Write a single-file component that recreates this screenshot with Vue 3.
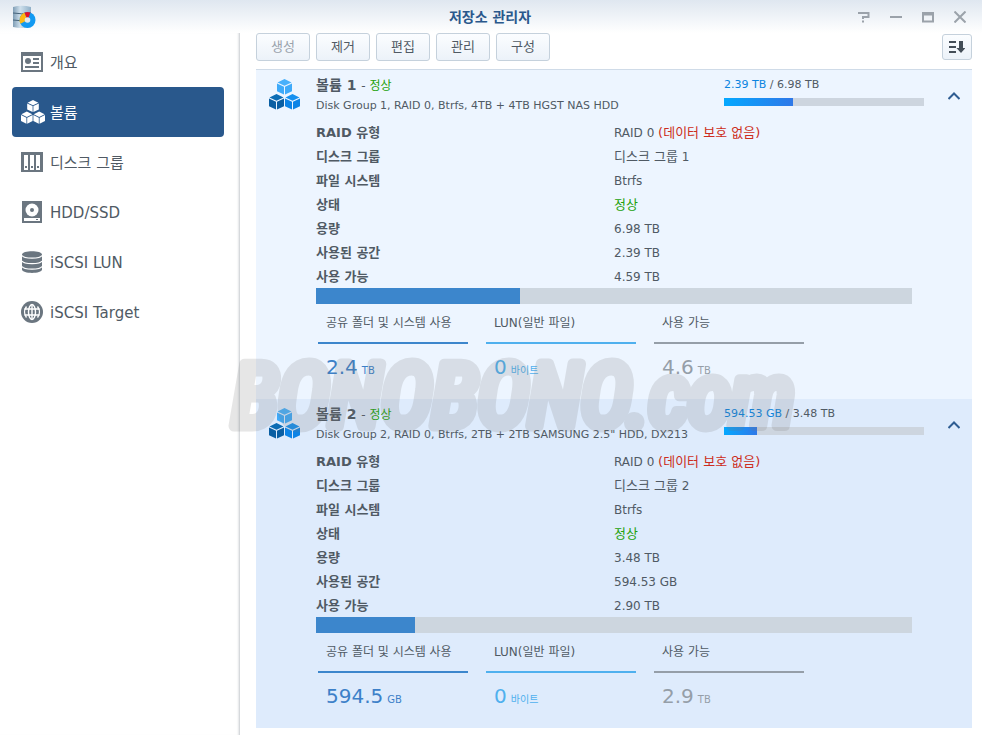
<template>
  <div class="window">
    <header class="titlebar">
      <svg class="app-icon" viewBox="0 0 24 24">
        <defs>
          <linearGradient id="disk" x1="0" x2="1">
            <stop offset="0" stop-color="#7f9db5" />
            <stop offset="0.4" stop-color="#cfe0ec" />
            <stop offset="1" stop-color="#8fb0c8" />
          </linearGradient>
        </defs>
        <path d="M1 2q8.500-2.500 18 0v20q-9 2-18 0z" fill="url(#disk)" />
        <path d="M1 8q8 1.500 18 0M1 15q8 1.500 18 0" fill="none" stroke="#46637a" />
        <circle cx="15.500" cy="15" r="8" fill="#129af2" />
        <path d="M15.500 15 8.500 18.800A8 8 0 0 1 12.500 7.600z" fill="#fdb813" />
        <path d="M15.500 15 12.500 7.600a8 8 0 0 1 6 0z" fill="#e3122b" />
        <circle cx="15.500" cy="15" r="2.800" fill="#dfe8ef" />
      </svg>
      <h1>저장소 관리자</h1>
      <div class="win-btns">
        <button aria-label="도움말"><svg viewBox="0 0 12 12"><path d="M0 2h10.500v4H5v2M5 9.500v2" /></svg></button>
        <button aria-label="최소화"><svg viewBox="0 0 12 12"><path d="M0 6h12" /></svg></button>
        <button aria-label="최대화"><svg viewBox="0 0 12 12"><path d="M1 2h10v8.500H1zM1 3.500h10" /></svg></button>
        <button aria-label="닫기"><svg viewBox="0 0 12 12"><path d="M.5.500l11 11M11.500.500l-11 11" /></svg></button>
      </div>
    </header>

    <div class="body">
      <nav class="sidebar">
        <a v-for="n in navs" :key="n.id" href="#" :class="{ active: n.id === current }" @click.prevent="current = n.id">
          <svg :viewBox="n.id === 'volume' ? '0 0 31 31' : '0 0 22 22'">
            <g v-if="n.id === 'overview'">
              <path d="M0 1h22v20H0z" /><path d="M2 5h18v14H2z" fill="#fff" />
              <circle cx="7" cy="10" r="3" /><path d="M12 7h6v2h-6zM12 11h6v2h-6zM4 15h14v2H4z" />
            </g>
            <g v-else-if="n.id === 'volume'">
              <path v-for="(f, i) in faces" :key="i" :d="f.d" />
            </g>
            <g v-else-if="n.id === 'group'">
              <path d="M0 1h22v20H0z" />
              <path d="M3 4h4v15H3zM9 4h4v15H9zM15 4h4v15h-4z" fill="#fff" />
              <path d="M4 15h2v2H4zM10 15h2v2h-2zM16 15h2v2h-2z" />
            </g>
            <g v-else-if="n.id === 'hdd'">
              <path d="M1 0h20v22H1z" /><circle cx="11" cy="9" r="6.500" fill="#fff" />
              <circle cx="11" cy="9" r="2" /><path d="M3 17h16v3H3z" fill="#fff" /><path d="M15 18h2v1h-2z" />
            </g>
            <g v-else-if="n.id === 'lun'">
              <path d="M1 3.500C1-1 21-1 21 3.500v15c0 4.500-20 4.500-20 0z" />
              <path d="M1 4.500c2 3.500 18 3.500 20 0M1 10c2 3.500 18 3.500 20 0M1 15.500c2 3.500 18 3.500 20 0" fill="none" stroke="#fff" stroke-width="1.300" />
            </g>
            <g v-else>
              <circle cx="11" cy="11" r="11" />
              <g fill="none" stroke="#fff" stroke-width="1.400">
                <path d="M3.500 8h15M3.500 14h15M11 3.500v15" /><ellipse cx="11" cy="11" rx="3.500" ry="7.500" />
                <path d="M5.500 5.500a9 9 0 0 0 0 11M16.500 5.500a9 9 0 0 1 0 11" />
              </g>
            </g>
          </svg>
          <span>{{ n.label }}</span>
        </a>
      </nav>

      <main>
        <div class="toolbar">
          <button v-for="(b, i) in ['생성', '제거', '편집', '관리', '구성']" :key="b" class="btn" :disabled="i === 0">{{ b }}</button>
          <button class="btn sort" aria-label="정렬">
            <svg viewBox="0 0 16 14"><path d="M0 1h7v2H0zM0 6h7v2H0zM0 11h7v2H0zM10 1h4v7h2.500L12 13 7.500 8H10z" /></svg>
          </button>
        </div>

        <div class="list">
          <section v-for="(v, i) in volumes" :key="v.name" class="volume" :class="{ selected: i === 1 }">
            <div class="head">
              <svg class="cubes" viewBox="0 0 31 31">
                <path v-for="(f, k) in faces" :key="k" :d="f.d" :fill="f.fill" />
              </svg>
              <div class="info">
                <h2>{{ v.name }} <small>- <span class="ok">정상</span></small></h2>
                <p>{{ v.desc }}</p>
              </div>
              <div class="usage">
                <div><span class="used">{{ v.used }}</span> / {{ v.total }}</div>
                <div class="mini"><div :style="{ width: v.miniPct + '%' }"></div></div>
              </div>
              <button class="toggle" aria-label="접기"><svg viewBox="0 0 12 8"><path d="M.5 7 6 1.500 11.500 7" /></svg></button>
            </div>

            <div class="detail">
              <dl>
                <dt>RAID 유형</dt><dd>RAID 0 <span class="warn">(데이터 보호 없음)</span></dd>
                <dt>디스크 그룹</dt><dd><span class="ko">디스크 그룹</span> {{ i + 1 }}</dd>
                <dt>파일 시스템</dt><dd>Btrfs</dd>
                <dt>상태</dt><dd class="ok ko">정상</dd>
                <dt>용량</dt><dd>{{ v.total }}</dd>
                <dt>사용된 공간</dt><dd>{{ v.used }}</dd>
                <dt>사용 가능</dt><dd>{{ v.free }}</dd>
              </dl>
              <div class="bar"><div :style="{ width: v.pct + '%' }"></div></div>
              <div class="stats">
                <div v-for="s in v.stats" :key="s.label" class="stat" :class="s.cls">
                  <div class="label">{{ s.label }}</div>
                  <div class="num">{{ s.num }}<small>{{ s.unit }}</small></div>
                </div>
              </div>
            </div>
          </section>
        </div>
      </main>
    </div>

    <svg class="watermark" width="600" height="110">
      <text x="8" y="81">BONOBONO.com</text>
    </svg>
  </div>
</template>

<script setup>
import { ref } from 'vue'

const current = ref('volume')
const navs = [
  { id: 'overview', label: '개요' },
  { id: 'volume', label: '볼륨' },
  { id: 'group', label: '디스크 그룹' },
  { id: 'hdd', label: 'HDD/SSD' },
  { id: 'lun', label: 'iSCSI LUN' },
  { id: 'target', label: 'iSCSI Target' },
]

// three faces of one cube, x/y is the centre
function cube(x, y, top, side) {
  return [
    { d: `M${x - 7} ${y - 4.6}L${x} ${y - 8}L${x + 7} ${y - 4.6}L${x} ${y - 1.2}z`, fill: top },
    { d: `M${x - 7.5} ${y - 3.6}L${x - 0.5} ${y - 0.2}V${y + 7.6}L${x - 7.5} ${y + 4.2}z`, fill: side },
    { d: `M${x + 7.5} ${y - 3.6}L${x + 0.5} ${y - 0.2}V${y + 7.6}L${x + 7.5} ${y + 4.2}z`, fill: side },
  ]
}
const faces = [
  ...cube(15.5, 8, '#48b0fb', '#3eaafa'),
  ...cube(7.5, 23, '#0b6cb4', '#0a5fa3'),
  ...cube(23.5, 23, '#1590f0', '#0d84e6'),
]

const volumes = [
  {
    name: '볼륨 1', desc: 'Disk Group 1, RAID 0, Btrfs, 4TB + 4TB HGST NAS HDD',
    used: '2.39 TB', total: '6.98 TB', free: '4.59 TB', pct: 34.2, miniPct: 34.5,
    stats: [
      { label: '공유 폴더 및 시스템 사용', num: '2.4', unit: 'TB', cls: 'shared' },
      { label: 'LUN(일반 파일)', num: '0', unit: '바이트', cls: 'lun' },
      { label: '사용 가능', num: '4.6', unit: 'TB', cls: 'free' },
    ],
  },
  {
    name: '볼륨 2', desc: 'Disk Group 2, RAID 0, Btrfs, 2TB + 2TB SAMSUNG 2.5" HDD, DX213',
    used: '594.53 GB', total: '3.48 TB', free: '2.90 TB', pct: 16.6, miniPct: 16.5,
    stats: [
      { label: '공유 폴더 및 시스템 사용', num: '594.5', unit: 'GB', cls: 'shared' },
      { label: 'LUN(일반 파일)', num: '0', unit: '바이트', cls: 'lun' },
      { label: '사용 가능', num: '2.9', unit: 'TB', cls: 'free' },
    ],
  },
]
</script>

<style>
body{margin:0;background:#fff}
</style>
<style scoped>
.window{position:relative;display:flex;flex-direction:column;min-height:100vh;color:#505a64;font-family:"DejaVu Sans","Noto Sans CJK KR",sans-serif;font-size:12px}
.window *{box-sizing:border-box}
h1,h2,p,dl,dd{margin:0}
button{font-family:inherit;padding:0;border:0;background:none;color:inherit}
svg{display:block}
.titlebar{display:grid;grid-template-columns:1fr auto 1fr;align-items:center;height:33px;padding:0 14px 0 12px;background:linear-gradient(#dfe7f0,#fff)}
.app-icon{width:24px;height:24px}
h1{font-size:14px;line-height:20px;color:#2a588c}
.win-btns{display:flex;justify-content:flex-end;gap:16px}
.win-btns button{width:16px;height:16px;display:grid;place-items:center}
.win-btns svg{width:12px;height:12px;fill:none;stroke:#9ba2aa;stroke-width:2}
.body{flex:1;display:flex}
.sidebar{flex:0 0 240px;padding:4px 15px 0 12px;border-right:1px solid #d6d9dc;box-shadow:inset -2px 0 2px -1px #e4e6e8}
.sidebar a{display:flex;align-items:center;gap:7px;height:50px;padding-left:9px;border-radius:4px;color:#505a64;font-size:15px;line-height:20px;text-decoration:none}
.sidebar span{padding-top:2px}
.sidebar svg{width:22px;height:22px;fill:#6b7680}
.sidebar a.active{background:#29588c;color:#fff}
.sidebar a.active svg{width:24px;height:24px;margin-right:-2px;fill:#fff}
main{flex:1;min-width:0;padding:0 10px 7px 16px}
.toolbar{display:flex;align-items:center;gap:6px;height:28px;margin-bottom:8px}
.btn{width:54px;height:28px;border:1px solid #c5d1dc;border-radius:3px;background:linear-gradient(#fbfdff,#ecf2f9);font-size:13px;line-height:20px}
.btn:disabled{color:#9aa3ac}
.sort{width:30px;height:26px;margin-left:auto;display:grid;place-items:center}
.sort svg{width:16px;height:14px;fill:#444e58}
.list{border-top:1px solid #cfdbe8}
.volume{min-height:329px;background:#edf5ff}
.volume.selected{background:#deebfc}
.head{display:flex;height:50px;padding:5px 12px 0 13px}
.cubes{width:31px;height:31px;margin-top:4px}
.info{flex:1;padding-left:16px;white-space:nowrap}
h2{font-size:14px;line-height:20px}
h2 small{font-size:12px;font-weight:400}
.info p{font-size:11px;line-height:20px}
.ok{color:#23a10b}
.warn{color:#cc2d20}
.usage{width:200px;margin-right:24px;font-size:11px;line-height:20px}
.used{color:#0a84e0}
.mini{height:8px;margin-top:3px;background:#cdd5df}
.mini div{height:8px;background:linear-gradient(90deg,#04a8ff,#2f78e8)}
.toggle{width:12px;height:42px;display:grid;place-items:center}
.toggle svg{width:12px;height:8px;fill:none;stroke:#2f5d92;stroke-width:2}
.detail{padding:0 60px}
dl{display:grid;grid-template-columns:1fr 1fr;line-height:26px}
dt{font-size:13px;font-weight:700;height:24px}
dd{height:24px}
dd.ko,dd .ko,.warn{font-size:13px}
.bar{height:16px;background:#cdd6df}
.bar div{height:16px;background:#3c86cc}
.stats{display:flex;gap:18px;padding:8px 2px 0}
.stat{width:150px}
.label{height:32px;padding:0 8px;line-height:22px;border-bottom:2px solid}
.num{padding:8px 8px 0;font-size:20px;line-height:30px}
.num small{margin-left:4px;font-size:10px}
.stat .label{color:#505a64}
.shared{color:#3c80c8}
.shared .label{border-color:#3c86cc}
.lun{color:#4fb0ee}
.lun .label{border-color:#4fb0ee}
.free{color:#959ea8}
.free .label{border-color:#959ea8}
.watermark{position:absolute;left:224px;top:345px;opacity:.18;pointer-events:none}
.watermark text{font:italic 87px "Liberation Sans Narrow","Roboto Condensed",sans-serif;fill:#777;stroke:#777;stroke-width:11px;stroke-linejoin:round}
</style>
